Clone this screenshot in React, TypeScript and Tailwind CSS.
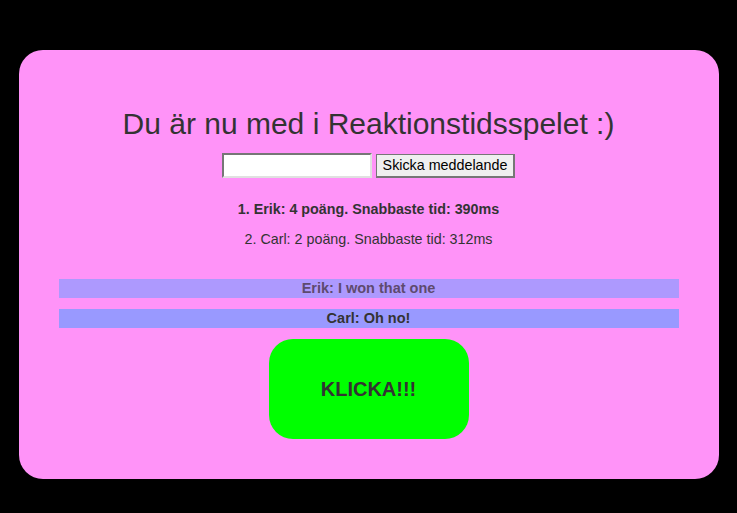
export default function App() {
  return (
    <div className="min-h-screen bg-black pt-[50px] font-['Liberation_Sans',Arial,sans-serif] text-[#333]">
      <div className="mx-auto w-[700px] rounded-[24px] bg-[#ff93f8] px-10 pt-[56px] pb-10 text-center">
        <h1 className="text-[30px] leading-[36px]">Du är nu med i Reaktionstidsspelet :)</h1>
        <div className="mt-[11px] flex items-center justify-center gap-[4px]">
          <input
            type="text"
            className="h-[25px] w-[150px] border-2 border-t-[#767676] border-l-[#767676] border-b-[#e0e0e0] border-r-[#e0e0e0] bg-white px-1 text-[13px]"
          />
          <button className="h-[24px] w-[139px] border border-[#767676] border-r-2 border-b-2 bg-[#efefef] text-[14.3px] text-black">
            Skicka meddelande
          </button>
        </div>
        <p className="mt-[23px] text-[14.3px] leading-[17px] font-bold">1. Erik: 4 poäng. Snabbaste tid: 390ms</p>
        <p className="mt-[13px] text-[14.3px] leading-[17px]">2. Carl: 2 poäng. Snabbaste tid: 312ms</p>
        <div className="mt-[31px] flex flex-col gap-[11px]">
          <div className="h-[19px] bg-[#ad99fe] text-[14.5px] font-bold leading-[19px] text-[#5e4a6e]">Erik: I won that one</div>
          <div className="h-[19px] bg-[#9999ff] text-[14.5px] font-bold leading-[19px]">Carl: Oh no!</div>
        </div>
        <button className="mx-auto mt-[11px] flex h-[100px] w-[200px] items-center justify-center rounded-[24px] bg-[#00ff00] text-[20px] font-bold text-[#333]">
          KLICKA!!!
        </button>
      </div>
    </div>
  );
}
